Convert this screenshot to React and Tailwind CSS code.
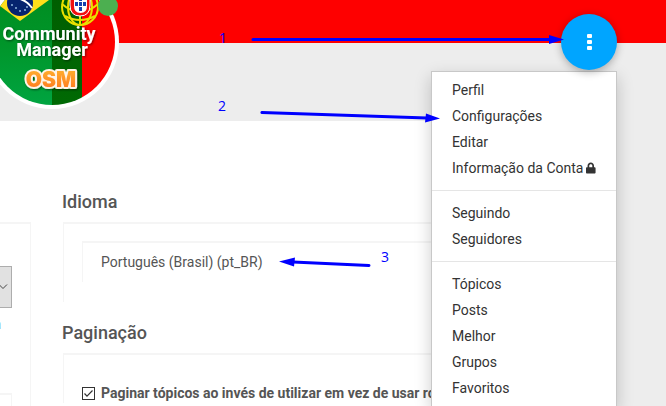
import React, { useState } from "react";
import { FaLock } from "react-icons/fa";

const menuGroups = [
  ["Perfil", "Configurações", "Editar", "Informação da Conta"],
  ["Seguindo", "Seguidores"],
  ["Tópicos", "Posts", "Melhor", "Grupos", "Favoritos"],
];

const Avatar = () => {
  return (
    <div className="absolute -left-[15px] -top-[25px] size-[134px]">
      <svg viewBox="-15 -25 134 134" className="size-full">
        <defs>
          <clipPath id="face">
            <circle cx="52" cy="42" r="63" />
          </clipPath>
          <linearGradient id="green" x1="0" y1="0" x2="0" y2="1">
            <stop offset="0" stopColor="#008a1e" />
            <stop offset="0.5" stopColor="#009529" />
            <stop offset="1" stopColor="#00a542" />
          </linearGradient>
          <linearGradient id="dark" x1="0" y1="0" x2="0" y2="1">
            <stop offset="0" stopColor="#005c00" />
            <stop offset="1" stopColor="#006a04" />
          </linearGradient>
          <linearGradient id="orange" x1="0" y1="0" x2="0" y2="1">
            <stop offset="0" stopColor="#ffb52e" />
            <stop offset="1" stopColor="#ff7420" />
          </linearGradient>
          <filter id="drop" x="-20%" y="-20%" width="140%" height="150%">
            <feDropShadow dx="1" dy="1" stdDeviation="1" floodOpacity="0.5" />
          </filter>
        </defs>
        <circle cx="52" cy="42" r="67" fill="#fff" />
        <g clipPath="url(#face)">
          <rect x="-15" y="-25" width="67" height="134" fill="url(#green)" />
          <rect x="52" y="-25" width="30" height="134" fill="url(#dark)" />
          <rect x="82" y="-25" width="40" height="134" fill="#fe0000" />
          {/* brazil */}
          <path d="M-8 0 L20 -20 L49 0 L20 21 Z" fill="#ffdf1b" />
          <circle cx="20" cy="3" r="13" fill="#06246f" />
          <path d="M7 -2 Q24 -4 32 8" stroke="#fff" strokeWidth="2" fill="none" />
          <g fill="#8fb4dd">
            <circle cx="12" cy="5" r="1" />
            <circle cx="16" cy="8" r="1" />
            <circle cx="20" cy="11" r="1" />
            <circle cx="25" cy="10" r="1" />
            <circle cx="27" cy="7" r="1" />
          </g>
          {/* portugal */}
          <g fill="none" stroke="#e8e000" strokeWidth="2">
            <circle cx="80" cy="7" r="18" />
            <ellipse cx="80" cy="7" rx="12" ry="18" />
            <path d="M62 4 Q80 20 98 4" />
            <path d="M65 16 Q80 24 95 16" />
            <path d="M80 7 V25" />
          </g>
          <path d="M70 -8 H90 V5 Q90 16 80 16 Q70 16 70 5 Z" fill="#f01010" stroke="#fff" strokeWidth="1" />
          <path d="M74 -5 H87 V6 Q87 13 80.5 13 Q74 13 74 6 Z" fill="#fff" />
          <g fill="#173fae">
            <rect x="79" y="-3" width="3" height="4" />
            <rect x="75" y="2" width="3" height="4" />
            <rect x="79" y="2" width="3" height="4" />
            <rect x="83" y="2" width="3" height="4" />
            <rect x="79" y="7" width="3" height="4" />
          </g>
        </g>
        <g filter="url(#drop)" fill="#fff" fontFamily="Roboto, sans-serif" fontWeight="700" fontSize="18">
          <text x="49" y="40" textAnchor="middle">Community</text>
          <text x="52" y="56" textAnchor="middle">Manager</text>
        </g>
        <text
          x="51"
          y="87"
          textAnchor="middle"
          fontFamily="Inter, sans-serif"
          fontWeight="900"
          fontSize="21"
          fill="url(#orange)"
          stroke="#fff4e8"
          strokeWidth="4"
          strokeLinejoin="round"
          paintOrder="stroke"
          filter="url(#drop)"
        >
          OSM
        </text>
        <circle cx="108" cy="6" r="10" fill="#4caf50" />
      </svg>
    </div>
  );
};

const Arrows = () => {
  return (
    <svg className="absolute left-0 top-0 pointer-events-none" width="666" height="406">
      <g stroke="#00f" strokeWidth="3" strokeLinecap="round">
        <path d="M253 39.5 H550" />
        <path d="M262 112.5 L427 118" />
        <path d="M369 265.5 L293 262" />
      </g>
      <g fill="#00f">
        <path d="M549 35 L564 39.5 L549 44 Z" />
        <path d="M426 113.5 L440 118.5 L425 122.5 Z" />
        <path d="M295 257.5 L279 261.5 L294 266.5 Z" />
      </g>
      <g fill="#00f" fontFamily="'Open Sans', sans-serif" fontSize="14">
        <text x="219" y="43">1</text>
        <text x="218" y="111">2</text>
        <text x="381" y="262">3</text>
      </g>
    </svg>
  );
};

const App = () => {
  const [paginate, setPaginate] = useState(true);

  return (
    <div className="relative h-screen overflow-hidden bg-[#ededed] font-['Roboto',sans-serif] text-sm text-[#555]">
      <header className="h-[121px]">
        <div className="h-[43px] bg-[#fe0000]"></div>
        <Avatar />
      </header>

      <main className="mr-[50px] flex min-h-full bg-white">
        {/* left column */}
        <div className="-ml-[100px] mt-[101px] w-[131px] shrink-0 border-r border-t-2 border-[#f5f5f5] pr-[18px] pt-[42px]">
          <div className="relative">
            <select
              aria-label="Página inicial"
              className="block h-[42px] w-full appearance-none border border-[#adadad] bg-[#e1e1e1]"
            ></select>
            <svg className="absolute right-[4px] top-[17px]" width="10" height="8" fill="none" stroke="#444">
              <path d="M1 1.5 L5 5.5 L9 1.5" />
            </svg>
          </div>
          <a href="#" className="mt-1 block pr-[11px] text-right leading-6 text-[#337ab7]">
            a
          </a>
          <div className="mt-[57px] h-10 border-r border-t-2 border-[#f5f5f5]"></div>
        </div>

        {/* right column */}
        <div className="ml-8 min-w-0 flex-1 pt-[71px]">
          <h2 className="-ml-px text-lg font-medium leading-5">Idioma</h2>
          <div className="mt-2.5 h-20 border-l border-t-2 border-[#f5f5f5] pl-[18px] pt-[17px]">
            <div className="h-[41px] border-l border-t-2 border-[#f5f5f5] pl-[18px] leading-[38px]">
              Português (Brasil) (pt_BR)
            </div>
          </div>

          <h2 className="-ml-px mt-[21px] text-lg font-medium leading-5">Paginação</h2>
          <div className="mt-2.5 border-l border-t-2 border-[#f5f5f5] pl-[18px] pt-7">
            <label className="flex items-center gap-1.5 whitespace-nowrap font-bold leading-5">
              <span className="relative size-[13px] shrink-0">
                <input
                  type="checkbox"
                  checked={paginate}
                  onChange={(e) => setPaginate(e.target.checked)}
                  className="block size-[13px] appearance-none border border-[#333] bg-white"
                />
                {paginate && (
                  <svg
                    className="pointer-events-none absolute inset-0"
                    width="13"
                    height="13"
                    fill="none"
                    stroke="#333"
                    strokeWidth="1.2"
                  >
                    <path d="M2.5 6.5 L5 9.2 L10.5 3.5" />
                  </svg>
                )}
              </span>
              Paginar tópicos ao invés de utilizar em vez de usar rolagem
            </label>
          </div>
        </div>
      </main>

      {/* dropdown */}
      <nav className="absolute -bottom-px right-[49px] top-[71px] w-[186px] border border-[#c8c8c8] bg-white py-[5px] shadow-[0_6px_16px_rgba(0,0,0,0.2)]">
        {menuGroups.map((group, i) => (
          <ul key={i} className={i > 0 ? "mt-[9px] border-t border-[#e5e5e5] pt-[9px]" : ""}>
            {group.map((item) => (
              <li key={item}>
                <a href="#" className="flex items-center gap-[3px] px-5 leading-[26px] whitespace-nowrap text-[#333]">
                  {item}
                  {item === "Informação da Conta" && <FaLock size={12} />}
                </a>
              </li>
            ))}
          </ul>
        ))}
      </nav>
      <button
        aria-label="Menu"
        className="absolute right-[49px] top-[14px] flex size-14 items-center justify-center rounded-full bg-[#00a5ff] shadow-[0_2px_8px_rgba(0,0,0,0.3)]"
      >
        <svg width="5" height="17" fill="#fff">
          <rect width="5" height="4" rx="1" />
          <rect y="6" width="5" height="4" rx="1" />
          <rect y="12" width="5" height="4" rx="1" />
        </svg>
      </button>

      <Arrows />
    </div>
  );
};

export default App;
